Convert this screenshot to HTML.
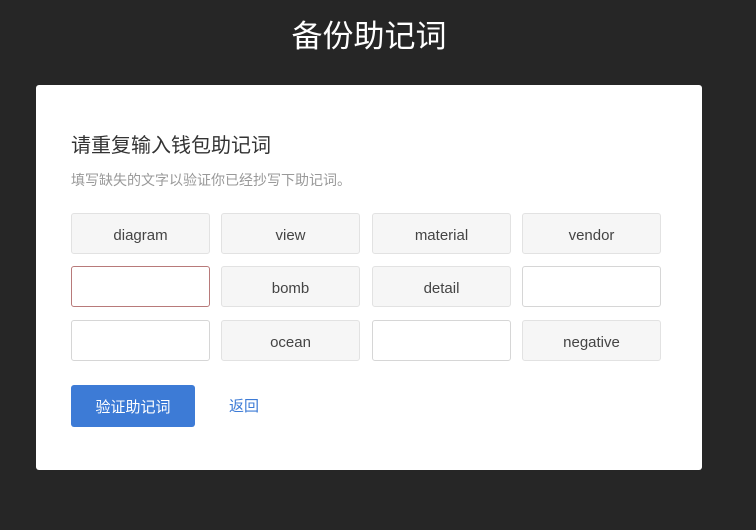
<!DOCTYPE html>
<html><head><meta charset="utf-8"><style>
body{margin:0;width:756px;height:530px;background:#262626;font-family:"Liberation Sans","Noto Sans CJK SC",sans-serif;position:relative;overflow:hidden}
h1{position:absolute;top:16px;left:0;width:738px;text-align:center;margin:0;color:#fff;font-size:31px;font-weight:normal;line-height:42px}
.card{position:absolute;left:36px;top:85px;width:666px;height:385px;background:#fff;border-radius:3px}
.t{position:absolute;left:35px;top:47px;font-size:20px;color:#333;line-height:28px}
.s{position:absolute;left:35px;top:85px;font-size:14px;color:#999;line-height:20px}
.c{position:absolute;width:137px;height:39px;border:1px solid #e2e2e2;border-radius:3px;background:#f6f6f6;text-align:center;line-height:43px;font-size:15px;color:#444}
.i{background:#fff;border-color:#d6d6d6}
.r{border-color:#b87a7a}
.b{position:absolute;left:35px;top:300px;width:124px;height:42px;background:#3d7bd6;border-radius:3px;color:#fff;font-size:15px;text-align:center;line-height:45px}
.a{position:absolute;left:193px;top:312px;color:#3d7bd6;font-size:15px;line-height:20px}
</style></head><body>
<h1>备份助记词</h1>
<div class="card">
<div class="t">请重复输入钱包助记词</div>
<div class="s">填写缺失的文字以验证你已经抄写下助记词。</div>
<div class="c" style="left:35px;top:128px">diagram</div>
<div class="c" style="left:185px;top:128px">view</div>
<div class="c" style="left:336px;top:128px">material</div>
<div class="c" style="left:486px;top:128px">vendor</div>
<div class="c i r" style="left:35px;top:181px"></div>
<div class="c" style="left:185px;top:181px">bomb</div>
<div class="c" style="left:336px;top:181px">detail</div>
<div class="c i" style="left:486px;top:181px"></div>
<div class="c i" style="left:35px;top:235px"></div>
<div class="c" style="left:185px;top:235px">ocean</div>
<div class="c i" style="left:336px;top:235px"></div>
<div class="c" style="left:486px;top:235px">negative</div>
<div class="b">验证助记词</div>
<div class="a">返回</div>
</div>
</body></html>
